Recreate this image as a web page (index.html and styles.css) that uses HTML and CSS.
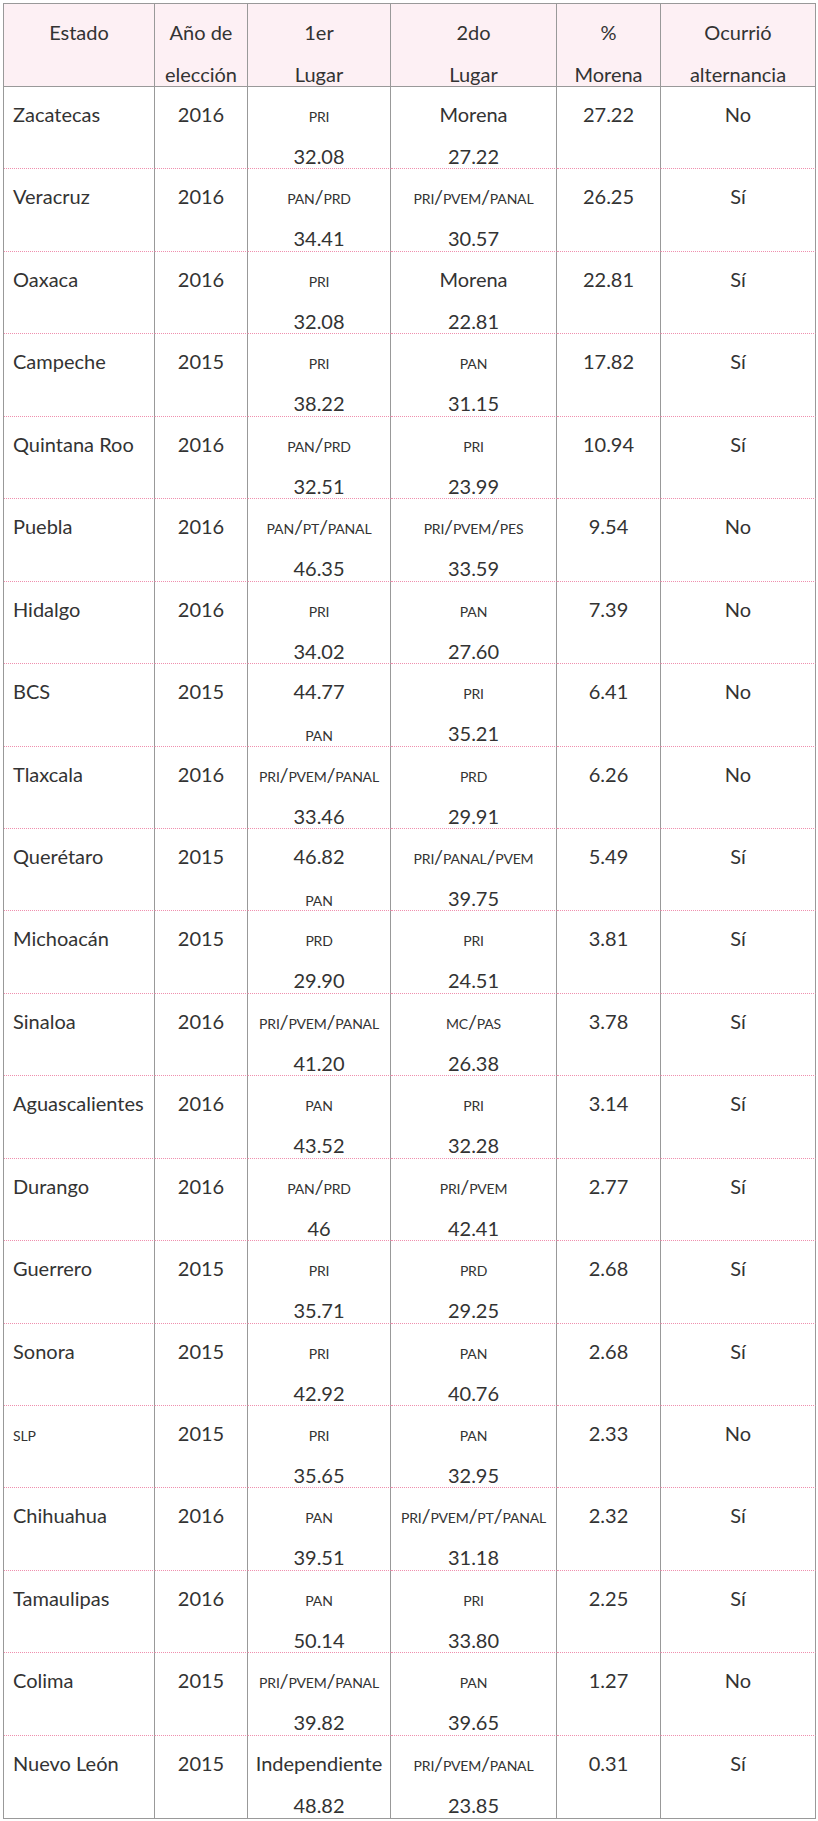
FILE: index.html
```html
<!DOCTYPE html>
<html lang="es">
<head>
<meta charset="utf-8">
<title>Elecciones</title>
<link rel="stylesheet" href="styles.css">
</head>
<body>
<div class="tbl">
<div class="h">Estado</div>
<div class="h">Año de<br>elección</div>
<div class="h">1er<br>Lugar</div>
<div class="h">2do<br>Lugar</div>
<div class="h">%<br>Morena</div>
<div class="h">Ocurrió<br>alternancia</div>

<div class="c st">Zacatecas</div><div class="c">2016</div><div class="c"><span class="sc">pri</span><br>32.08</div><div class="c">Morena<br>27.22</div><div class="c">27.22</div><div class="c">No</div>
<div class="c st">Veracruz</div><div class="c">2016</div><div class="c"><span class="sc">pan/prd</span><br>34.41</div><div class="c"><span class="sc">pri/pvem/panal</span><br>30.57</div><div class="c">26.25</div><div class="c">Sí</div>
<div class="c st">Oaxaca</div><div class="c">2016</div><div class="c"><span class="sc">pri</span><br>32.08</div><div class="c">Morena<br>22.81</div><div class="c">22.81</div><div class="c">Sí</div>
<div class="c st">Campeche</div><div class="c">2015</div><div class="c"><span class="sc">pri</span><br>38.22</div><div class="c"><span class="sc">pan</span><br>31.15</div><div class="c">17.82</div><div class="c">Sí</div>
<div class="c st">Quintana Roo</div><div class="c">2016</div><div class="c"><span class="sc">pan/prd</span><br>32.51</div><div class="c"><span class="sc">pri</span><br>23.99</div><div class="c">10.94</div><div class="c">Sí</div>
<div class="c st">Puebla</div><div class="c">2016</div><div class="c"><span class="sc">pan/pt/panal</span><br>46.35</div><div class="c"><span class="sc">pri/pvem/pes</span><br>33.59</div><div class="c">9.54</div><div class="c">No</div>
<div class="c st">Hidalgo</div><div class="c">2016</div><div class="c"><span class="sc">pri</span><br>34.02</div><div class="c"><span class="sc">pan</span><br>27.60</div><div class="c">7.39</div><div class="c">No</div>
<div class="c st">BCS</div><div class="c">2015</div><div class="c">44.77<br><span class="sc">pan</span></div><div class="c"><span class="sc">pri</span><br>35.21</div><div class="c">6.41</div><div class="c">No</div>
<div class="c st">Tlaxcala</div><div class="c">2016</div><div class="c"><span class="sc">pri/pvem/panal</span><br>33.46</div><div class="c"><span class="sc">prd</span><br>29.91</div><div class="c">6.26</div><div class="c">No</div>
<div class="c st">Querétaro</div><div class="c">2015</div><div class="c">46.82<br><span class="sc">pan</span></div><div class="c"><span class="sc">pri/panal/pvem</span><br>39.75</div><div class="c">5.49</div><div class="c">Sí</div>
<div class="c st">Michoacán</div><div class="c">2015</div><div class="c"><span class="sc">prd</span><br>29.90</div><div class="c"><span class="sc">pri</span><br>24.51</div><div class="c">3.81</div><div class="c">Sí</div>
<div class="c st">Sinaloa</div><div class="c">2016</div><div class="c"><span class="sc">pri/pvem/panal</span><br>41.20</div><div class="c"><span class="sc">mc/pas</span><br>26.38</div><div class="c">3.78</div><div class="c">Sí</div>
<div class="c st">Aguascalientes</div><div class="c">2016</div><div class="c"><span class="sc">pan</span><br>43.52</div><div class="c"><span class="sc">pri</span><br>32.28</div><div class="c">3.14</div><div class="c">Sí</div>
<div class="c st">Durango</div><div class="c">2016</div><div class="c"><span class="sc">pan/prd</span><br>46</div><div class="c"><span class="sc">pri/pvem</span><br>42.41</div><div class="c">2.77</div><div class="c">Sí</div>
<div class="c st">Guerrero</div><div class="c">2015</div><div class="c"><span class="sc">pri</span><br>35.71</div><div class="c"><span class="sc">prd</span><br>29.25</div><div class="c">2.68</div><div class="c">Sí</div>
<div class="c st">Sonora</div><div class="c">2015</div><div class="c"><span class="sc">pri</span><br>42.92</div><div class="c"><span class="sc">pan</span><br>40.76</div><div class="c">2.68</div><div class="c">Sí</div>
<div class="c st"><span class="sc">slp</span></div><div class="c">2015</div><div class="c"><span class="sc">pri</span><br>35.65</div><div class="c"><span class="sc">pan</span><br>32.95</div><div class="c">2.33</div><div class="c">No</div>
<div class="c st">Chihuahua</div><div class="c">2016</div><div class="c"><span class="sc">pan</span><br>39.51</div><div class="c"><span class="sc">pri/pvem/pt/panal</span><br>31.18</div><div class="c">2.32</div><div class="c">Sí</div>
<div class="c st">Tamaulipas</div><div class="c">2016</div><div class="c"><span class="sc">pan</span><br>50.14</div><div class="c"><span class="sc">pri</span><br>33.80</div><div class="c">2.25</div><div class="c">Sí</div>
<div class="c st">Colima</div><div class="c">2015</div><div class="c"><span class="sc">pri/pvem/panal</span><br>39.82</div><div class="c"><span class="sc">pan</span><br>39.65</div><div class="c">1.27</div><div class="c">No</div>
<div class="c st">Nuevo León</div><div class="c">2015</div><div class="c">Independiente<br>48.82</div><div class="c"><span class="sc">pri/pvem/panal</span><br>23.85</div><div class="c">0.31</div><div class="c">Sí</div>
</div>
</body>
</html>
```

FILE: styles.css
```css
html, body {
  margin: 0;
  padding: 0;
  background: #ffffff;
}

body {
  padding: 3px 0 0 3px;
}

.tbl {
  display: grid;
  grid-template-columns: 151px 93px 143px 166px 104px 155px;
  grid-template-rows: 83px;
  grid-auto-rows: 82.45px;
  width: 813px;
  box-sizing: border-box;
  border-top: 1px solid #999999;
  border-left: 1px solid #999999;
  border-bottom: 1px solid #999999;
  font-family: Lato, "Noto Sans", sans-serif;
  font-size: 20px;
  color: #333333;
}

.h,
.c {
  box-sizing: border-box;
  border-right: 1px solid #999999;
  text-align: center;
  line-height: 42px;
  white-space: nowrap;
  min-width: 0;
  overflow: visible;
}

.h {
  background: #fdf0f4;
  border-bottom: 1px solid #999999;
  padding-top: 7px;
}

.c {
  padding-top: 6px;
  border-bottom: 1px dotted #ef8fae;
}

.c:nth-last-child(-n+6) {
  border-bottom: none;
}

.st {
  text-align: left;
  padding-left: 9px;
}

.sc {
  font-variant: small-caps;
  letter-spacing: -0.2px;
}
```
